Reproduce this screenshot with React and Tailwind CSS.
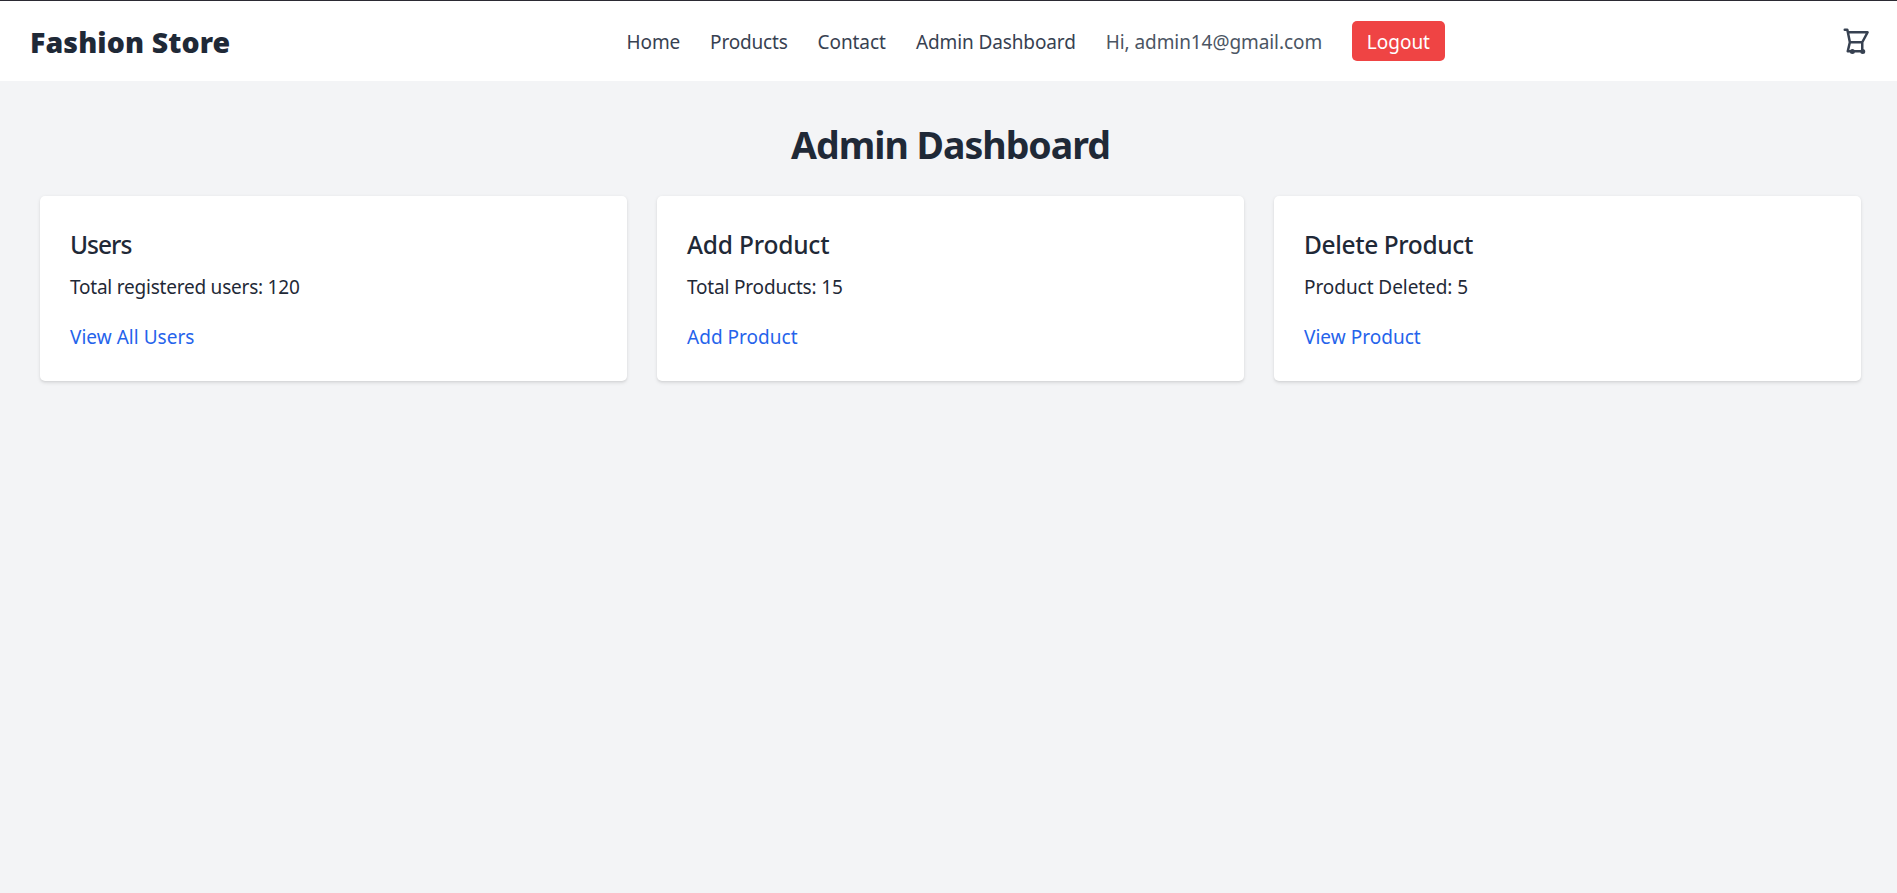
const links = [
  { label: "Home", className: "w-[53.6px] tracking-[-0.1px]" },
  { label: "Products", className: "w-[77.4px] tracking-[-0.19px]" },
  { label: "Contact", className: "w-[68.4px] tracking-[-0.06px]" },
  { label: "Admin Dashboard", className: "w-[159.9px] tracking-[-0.11px]" },
];

const cards = [
  {
    title: "Users",
    titleClass: "tracking-[-1px]",
    text: "Total registered users: 120",
    textClass: "tracking-[-0.22px]",
    link: "View All Users",
  },
  {
    title: "Add Product",
    titleClass: "tracking-[-0.2px]",
    text: "Total Products: 15",
    textClass: "tracking-[-0.18px]",
    link: "Add Product",
  },
  {
    title: "Delete Product",
    titleClass: "tracking-[-0.38px]",
    text: "Product Deleted: 5",
    textClass: "tracking-[-0.06px]",
    link: "View Product",
  },
];

function CartIcon() {
  return (
    <svg
      className="size-[30px] text-[#374151]"
      viewBox="0 0 24 24"
      fill="none"
      stroke="currentColor"
      strokeWidth="2"
      strokeLinecap="round"
      strokeLinejoin="round"
    >
      <path d="M3 2.9h2l.5 2M7.1 13h9.9l4.3-8H5.5zM7.1 13l-1.7 7.2H17V13" />
      <circle cx="9.1" cy="20.3" r="1" />
      <circle cx="17.4" cy="20.3" r="1" />
    </svg>
  );
}

function Header() {
  return (
    <header className="flex h-[81px] items-center justify-between border-t border-[#2b2a33] bg-white px-[30px]">
      <a
        href="#"
        className="w-[199.4px] pt-[2px] text-[28.5px] leading-[40px] font-black tracking-[0.1px] text-[#1f2937]"
      >
        Fashion Store
      </a>
      <nav className="flex items-center gap-[30px] text-[19px] leading-[30px] text-[#374151]">
        {links.map(({ label, className }) => (
          <a key={label} href="#" className={`pt-[2px] pl-[1px] ${className}`}>
            {label}
          </a>
        ))}
        <span className="w-[217.1px] pt-[2px] pl-[1px] tracking-[-0.08px] text-[#4b5563]">
          Hi, admin14@gmail.com
        </span>
        <button className="flex h-10 w-[93px] items-center justify-center rounded-[5px] bg-[#ef4444] pt-[2px] text-white">
          Logout
        </button>
      </nav>
      <a href="#" aria-label="Cart">
        <CartIcon />
      </a>
    </header>
  );
}

function Card({ title, titleClass, text, textClass, link }) {
  return (
    <section className="rounded-[5px] bg-white px-[30px] pt-[31px] pb-[29px] shadow-[0_1.25px_3.75px_rgba(0,0,0,0.1),0_1.25px_2.5px_-1.25px_rgba(0,0,0,0.1)]">
      <h2 className={`mb-[10px] text-[24.5px] leading-[35px] font-medium ${titleClass}`}>
        {title}
      </h2>
      <p className={`text-[19px] leading-[30px] ${textClass}`}>{text}</p>
      <a href="#" className="mt-5 block text-[19px] leading-[30px] tracking-[0.03px] text-[#2563eb]">
        {link}
      </a>
    </section>
  );
}

export default function App() {
  return (
    <div className="h-screen overflow-hidden bg-[#f3f4f6] font-['Noto_Sans',sans-serif] whitespace-nowrap text-[#1f2937]">
      <div className="w-[1901px]">
        <Header />
        <main className="px-[40px] pt-[41px]">
          <h1 className="mb-[29px] text-center text-[37.5px] leading-[45px] font-bold tracking-[-1px]">
            Admin Dashboard
          </h1>
          <div className="grid grid-cols-3 gap-[30px]">
            {cards.map((card) => (
              <Card key={card.title} {...card} />
            ))}
          </div>
        </main>
      </div>
    </div>
  );
}
